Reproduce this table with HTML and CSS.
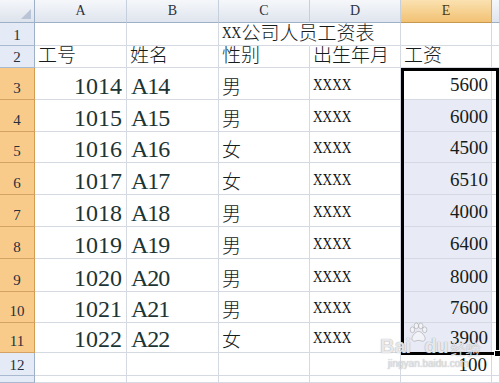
FILE: index.html
```html
<!DOCTYPE html>
<html lang="zh">
<head>
<meta charset="utf-8">
<title>XX公司人员工资表</title>
<link rel="stylesheet" href="styles.css">
</head>
<body>
<div class="sheet">
  <!-- column headers -->
  <div class="corner"></div>
  <div class="ch">A</div>
  <div class="ch">B</div>
  <div class="ch">C</div>
  <div class="ch">D</div>
  <div class="ch sel">E</div>
  <div class="ch"></div>

  <!-- row 1 -->
  <div class="rh">1</div>
  <div class="c"></div>
  <div class="c"></div>
  <div class="c cn over"><span class="lat">XX</span>公司人员工资表</div>
  <div class="c"></div>
  <div class="c"></div>
  <div class="c"></div>

  <!-- row 2 -->
  <div class="rh">2</div>
  <div class="c cn">工号</div>
  <div class="c cn">姓名</div>
  <div class="c cn">性别</div>
  <div class="c cn">出生年月</div>
  <div class="c cn">工资</div>
  <div class="c"></div>

  <!-- row 3 -->
  <div class="rh sel">3</div>
  <div class="c big num">1014</div>
  <div class="c big code">A14</div>
  <div class="c cn">男</div>
  <div class="c xx"><span class="sx">XXXX</span></div>
  <div class="c sal num active">5600</div>
  <div class="c"></div>

  <!-- row 4 -->
  <div class="rh sel">4</div>
  <div class="c big num">1015</div>
  <div class="c big code">A15</div>
  <div class="c cn">男</div>
  <div class="c xx"><span class="sx">XXXX</span></div>
  <div class="c sal num">6000</div>
  <div class="c"></div>

  <!-- row 5 -->
  <div class="rh sel">5</div>
  <div class="c big num">1016</div>
  <div class="c big code">A16</div>
  <div class="c cn">女</div>
  <div class="c xx"><span class="sx">XXXX</span></div>
  <div class="c sal num">4500</div>
  <div class="c"></div>

  <!-- row 6 -->
  <div class="rh sel">6</div>
  <div class="c big num">1017</div>
  <div class="c big code">A17</div>
  <div class="c cn">女</div>
  <div class="c xx"><span class="sx">XXXX</span></div>
  <div class="c sal num">6510</div>
  <div class="c"></div>

  <!-- row 7 -->
  <div class="rh sel">7</div>
  <div class="c big num">1018</div>
  <div class="c big code">A18</div>
  <div class="c cn">男</div>
  <div class="c xx"><span class="sx">XXXX</span></div>
  <div class="c sal num">4000</div>
  <div class="c"></div>

  <!-- row 8 -->
  <div class="rh sel">8</div>
  <div class="c big num">1019</div>
  <div class="c big code">A19</div>
  <div class="c cn">男</div>
  <div class="c xx"><span class="sx">XXXX</span></div>
  <div class="c sal num">6400</div>
  <div class="c"></div>

  <!-- row 9 -->
  <div class="rh sel">9</div>
  <div class="c big num">1020</div>
  <div class="c big code">A20</div>
  <div class="c cn">男</div>
  <div class="c xx"><span class="sx">XXXX</span></div>
  <div class="c sal num">8000</div>
  <div class="c"></div>

  <!-- row 10 -->
  <div class="rh sel">10</div>
  <div class="c big num">1021</div>
  <div class="c big code">A21</div>
  <div class="c cn">男</div>
  <div class="c xx"><span class="sx">XXXX</span></div>
  <div class="c sal num">7600</div>
  <div class="c"></div>

  <!-- row 11 -->
  <div class="rh sel">11</div>
  <div class="c big num">1022</div>
  <div class="c big code">A22</div>
  <div class="c cn">女</div>
  <div class="c xx"><span class="sx">XXXX</span></div>
  <div class="c sal num">3900</div>
  <div class="c"></div>

  <!-- row 12 -->
  <div class="rh">12</div>
  <div class="c"></div>
  <div class="c"></div>
  <div class="c"></div>
  <div class="c"></div>
  <div class="c num tot">100</div>
  <div class="c"></div>

  <!-- row 13 (cut off) -->
  <div class="rh"></div>
  <div class="c"></div>
  <div class="c"></div>
  <div class="c"></div>
  <div class="c"></div>
  <div class="c"></div>
  <div class="c"></div>

  <!-- selection frame around E3:E11 -->
  <div class="selection"><span class="handle"></span></div>

  <!-- watermark -->
  <div class="wm">
    <div class="wm-logo">
      <span class="wm-bai">Bai</span>
      <svg class="wm-paw" width="20" height="20" viewBox="0 0 18 18">
        <ellipse cx="4" cy="7" rx="2" ry="2.6" />
        <ellipse cx="7.5" cy="3.5" rx="2" ry="2.6" />
        <ellipse cx="11.5" cy="3.5" rx="2" ry="2.6" />
        <ellipse cx="15" cy="7" rx="2" ry="2.6" />
        <path d="M9.5 8.5c-3 0-6 4.5-6 6.5 0 2 2 2.5 3 2.2 1-.3 2-.7 3-.7s2 .4 3 .7c1 .3 3-.2 3-2.2 0-2-3-6.5-6-6.5z" />
      </svg>
      <span class="wm-du">du</span>
      <span class="wm-jy">经验</span>
    </div>
    <div class="wm-url">jingyan.baidu.com</div>
  </div>
</div>
</body>
</html>
```

FILE: styles.css
```css
* {
  box-sizing: border-box;
}

html,
body {
  margin: 0;
  padding: 0;
  background: #fff;
}

body {
  width: 500px;
  height: 383px;
  overflow: hidden;
  font-family: "Liberation Serif", "Noto Sans CJK SC", serif;
  color: #161c1c;
}

.sheet {
  position: relative;
  display: grid;
  grid-template-columns: 35px 92px 92px 91px 91px 91px 1fr;
  grid-template-rows: 23px 23px 22px 32px 32px 31px 32px 32px 32px 33px 31px 30px 23px 1fr;
  width: 500px;
  height: 383px;
  background: #fff;
}

/* ---------- headers ---------- */
.corner {
  position: relative;
  background: linear-gradient(#f4f6fa, #dde3ec);
  border-right: 1px solid #9eb0c8;
  border-bottom: 1px solid #9eb0c8;
}

.corner::after {
  content: "";
  position: absolute;
  right: 3px;
  bottom: 3px;
  width: 0;
  height: 0;
  border-left: 10px solid transparent;
  border-bottom: 10px solid #b9c5d6;
}

.ch {
  display: flex;
  align-items: center;
  justify-content: center;
  background: linear-gradient(#f5f7fa, #dfe5ee);
  border-right: 1px solid #c6cfdc;
  border-bottom: 1px solid #9eb0c8;
  font-size: 14px;
  color: #2b3440;
}

.ch.sel {
  background: linear-gradient(#fae1b0, #f2c274);
  border-right-color: #d9a85c;
  border-bottom-color: #c79850;
  color: #4b3a18;
}

.rh {
  display: flex;
  align-items: flex-end;
  justify-content: center;
  padding-bottom: 2px;
  background: #e4ebf6;
  border-right: 1px solid #9eb0c8;
  border-bottom: 1px solid #a9bad0;
  font-size: 15px;
  line-height: 1;
  color: #26303c;
}

.rh.sel {
  padding-bottom: 3px;
  background: #f9cb8b;
  border-right-color: #d39c50;
  border-bottom-color: #d4a363;
}

/* ---------- cells ---------- */
.c {
  display: flex;
  align-items: flex-end;
  min-width: 0;
  padding: 0 3px 0 3px;
  overflow: hidden;
  white-space: nowrap;
  line-height: 1;
  border-right: 1px solid #d5dae2;
  border-bottom: 1px solid #d5dae2;
}

.c.over {
  overflow: visible;
  border-right-color: transparent;
  z-index: 1;
}

.cn {
  font-size: 19px;
  font-weight: 300;
  padding-bottom: 2px;
  padding-left: 3px;
}

/* half-width serif Latin, like the sheet's Song-style Latin glyphs */
.lat {
  display: inline-block;
  font-family: "Liberation Serif", serif;
  font-size: 17px;
  font-weight: 400;
  padding-bottom: 2px;
  margin-right: -5px;
  transform: scaleX(0.78);
  transform-origin: left bottom;
}

.big {
  font-size: 24px;
  color: #1c3433;
  padding-bottom: 1px;
}

.num {
  justify-content: flex-end;
  padding-right: 4px;
}

.code {
  padding-left: 4px;
  letter-spacing: -1px;
}

.xx {
  padding-bottom: 6px;
}

.sx {
  display: inline-block;
  font-size: 17px;
  color: #111;
  transform: scaleX(0.78);
  transform-origin: left bottom;
}

.sal {
  font-size: 19px;
  padding-bottom: 5px;
  padding-right: 3px;
  background: #e8ebf5;
}

.sal.active {
  background: #fff;
}

.tot {
  font-size: 19px;
  padding-bottom: 1px;
  padding-right: 4px;
}

/* ---------- selection frame (overlay on the grid area E3:E11) ---------- */
.selection {
  position: absolute;
  grid-column: 6;
  grid-row: 4 / 13;
  top: 0;
  left: 0;
  right: 1px;
  bottom: -2px;
  border: 3px solid #000;
  z-index: 2;
  pointer-events: none;
}

.handle {
  position: absolute;
  right: -5px;
  bottom: -5px;
  width: 7px;
  height: 7px;
  background: #000;
  border: 1px solid #fff;
}

/* ---------- watermark ---------- */
.wm {
  position: absolute;
  left: 380px;
  top: 322px;
  z-index: 3;
  pointer-events: none;
}

.wm-logo {
  display: flex;
  align-items: flex-end;
  height: 34px;
}

.wm-bai,
.wm-du {
  font-family: "Liberation Sans", sans-serif;
  font-weight: bold;
  font-size: 20px;
  line-height: 1;
  color: rgba(245, 246, 250, 0.9);
  text-shadow: 0 0 1px rgba(100, 100, 100, 0.8);
}

.wm-paw {
  align-self: flex-start;
  margin: 0 -4px 0 -3px;
  fill: rgba(245, 246, 250, 0.75);
  stroke: rgba(130, 130, 130, 0.6);
  stroke-width: 0.6;
}

.wm-jy {
  margin-left: 2px;
  font-family: "Noto Sans CJK SC", sans-serif;
  font-size: 15px;
  line-height: 1;
  color: rgba(245, 246, 250, 0.85);
  text-shadow: 0 0 1px rgba(100, 100, 100, 0.7);
}

.wm-url {
  margin: 3px 0 0 8px;
  font-family: "Liberation Sans", sans-serif;
  font-size: 10px;
  line-height: 1;
  color: rgba(235, 236, 240, 0.85);
  text-shadow: 0 0 1px rgba(110, 110, 110, 0.7);
}
```
